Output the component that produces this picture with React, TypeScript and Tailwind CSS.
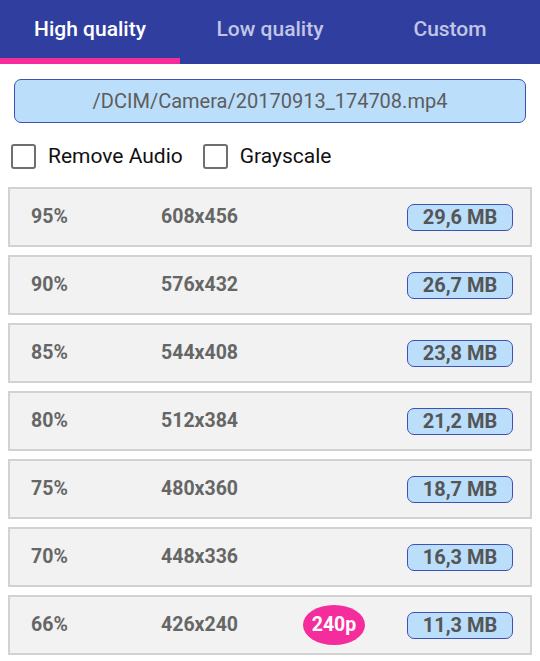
const rows = [
  { pct: "95%", res: "608x456", size: "29,6 MB" },
  { pct: "90%", res: "576x432", size: "26,7 MB" },
  { pct: "85%", res: "544x408", size: "23,8 MB" },
  { pct: "80%", res: "512x384", size: "21,2 MB" },
  { pct: "75%", res: "480x360", size: "18,7 MB" },
  { pct: "70%", res: "448x336", size: "16,3 MB" },
  { pct: "66%", res: "426x240", size: "11,3 MB", tag: "240p" },
];

function Checkbox({ label }: { label: string }) {
  return (
    <label className="flex items-center gap-[12px]">
      <span className="h-[25px] w-[25px] rounded-[3px] border-2 border-[#6f6f6f] bg-white" />
      <span className="text-[21px] leading-[28px] text-[#111]">{label}</span>
    </label>
  );
}

export default function App() {
  return (
    <div className="h-[661px] w-[540px] overflow-hidden bg-white font-['Roboto',sans-serif]">
      <nav className="flex h-[64px] bg-[#303f9f]">
        {["High quality", "Low quality", "Custom"].map((t, i) => (
          <div
            key={t}
            className={
              i === 0
                ? "flex flex-1 items-center justify-center border-b-[6px] border-[#f72c9b] pt-[2px] text-[21px] font-medium text-white"
                : "flex flex-1 items-center justify-center border-b-[6px] border-transparent pt-[2px] text-[21px] font-medium text-[#c1c5e6]"
            }
          >
            {t}
          </div>
        ))}
      </nav>

      <div className="mx-[14px] mt-[15px] flex h-[44px] items-center justify-center rounded-[7px] border border-[#3f51b5] bg-[#bbdefb] text-[20px] text-[#5d5d5d]">
        /DCIM/Camera/20170913_174708.mp4
      </div>

      <div className="ml-[11px] mt-[19px] flex gap-[20px]">
        <Checkbox label="Remove Audio" />
        <Checkbox label="Grayscale" />
      </div>

      <div className="mx-[8px] mt-[17px] flex flex-col gap-[8px]">
        {rows.map((r) => (
          <div
            key={r.pct}
            className="flex h-[60px] items-center border-2 border-[#d2d2d2] bg-[#f2f2f2] text-[19.5px] font-bold text-[#666]"
          >
            <span className="ml-[21px] w-[130px]">{r.pct}</span>
            <span className="w-[142px]">{r.res}</span>
            <span className="flex w-[104px]">
              {r.tag && (
                <span className="flex h-[40px] w-[62px] items-center justify-center rounded-[50%] bg-[#f52c9c] text-[19.5px] font-bold text-white">
                  {r.tag}
                </span>
              )}
            </span>
            <span className="flex h-[27px] w-[106px] items-center justify-center rounded-[7px] border border-[#3f51b5] bg-[#bbdefb] text-[20px] text-[#555]">
              {r.size}
            </span>
          </div>
        ))}
      </div>
    </div>
  );
}
